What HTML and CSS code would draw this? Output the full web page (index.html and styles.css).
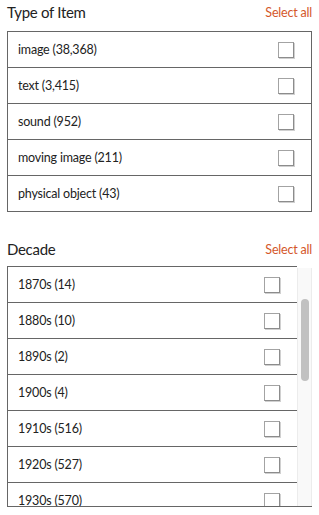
FILE: index.html
```html
<!DOCTYPE html>
<html lang="en">
<head>
  <meta charset="UTF-8">
  <meta name="viewport" content="width=device-width, initial-scale=1.0">
  <title>Filters</title>
  <link rel="stylesheet" href="styles.css">
</head>
<body>
  <div class="panel">
    <div class="facet facet-type">
      <div class="facet-head">
        <h3>Type of Item</h3>
        <a href="#" class="select-all">Select all</a>
      </div>
      <div class="facet-box">
        <label class="row"><span>image (38,368)</span><span class="check"></span></label>
        <label class="row"><span>text (3,415)</span><span class="check"></span></label>
        <label class="row"><span>sound (952)</span><span class="check"></span></label>
        <label class="row"><span>moving image (211)</span><span class="check"></span></label>
        <label class="row"><span>physical object (43)</span><span class="check"></span></label>
      </div>
    </div>

    <div class="facet facet-decade">
      <div class="facet-head">
        <h3>Decade</h3>
        <a href="#" class="select-all">Select all</a>
      </div>
      <div class="scroll-box">
        <div class="decade-list">
          <label class="row"><span>1870s (14)</span><span class="check"></span></label>
          <label class="row"><span>1880s (10)</span><span class="check"></span></label>
          <label class="row"><span>1890s (2)</span><span class="check"></span></label>
          <label class="row"><span>1900s (4)</span><span class="check"></span></label>
          <label class="row"><span>1910s (516)</span><span class="check"></span></label>
          <label class="row"><span>1920s (527)</span><span class="check"></span></label>
          <label class="row"><span>1930s (570)</span><span class="check"></span></label>
        </div>
        <div class="scroll-track">
          <div class="scroll-thumb"></div>
        </div>
      </div>
    </div>
  </div>
</body>
</html>
```

FILE: styles.css
```css
body {
  margin: 0;
  font-family: 'Lato', 'Liberation Sans', sans-serif;
  color: #222;
  background-color: #fff;
}

.panel {
  padding: 0 7px;
}

.facet-head {
  display: flex;
  justify-content: space-between;
  align-items: center;
  height: 24px;
}

.facet-type .facet-head {
  margin-bottom: 7px;
}

.facet-decade {
  margin-top: 25px;
}

.facet-decade .facet-head {
  margin-bottom: 5px;
}

h3 {
  margin: 0;
  font-size: 15px;
  font-weight: normal;
  letter-spacing: -0.3px;
}

.select-all {
  color: #d4572a;
  font-size: 12.5px;
  letter-spacing: -0.2px;
  text-decoration: none;
}

.facet-box {
  border: 1px solid #666;
  border-bottom: none;
}

.row {
  display: flex;
  justify-content: space-between;
  align-items: center;
  height: 35px;
  padding: 0 17px 0 10px;
  font-size: 12.5px;
  letter-spacing: -0.2px;
  border-bottom: 1px solid #666;
}

.check {
  width: 14px;
  height: 14px;
  border: 1px solid #a3a3a3;
  border-right-color: #8c8c8c;
  border-bottom-color: #8c8c8c;
  box-shadow: 1px 1px 0 #d0d0d0;
}

.scroll-box {
  display: flex;
  height: 240px;
  border-left: 1px solid #666;
  border-bottom: 1px solid #666;
}

.decade-list {
  flex: 1;
  overflow: hidden;
}

.decade-list .row {
  border-bottom: none;
  border-top: 1px solid #666;
}

.scroll-track {
  width: 13px;
  margin-top: 2px;
  background-color: #f9f9f9;
  border-left: 1px solid #ececec;
  border-right: 1px solid #ececec;
}

.scroll-thumb {
  width: 8px;
  height: 82px;
  margin: 31px auto 0;
  border-radius: 4px;
  background-color: #c1c1c1;
}
```
